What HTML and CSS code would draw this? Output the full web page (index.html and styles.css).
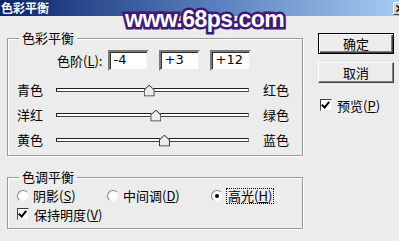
FILE: index.html
```html
<!DOCTYPE html>
<html lang="zh-CN">
<head>
    <meta charset="UTF-8">
    <title>色彩平衡</title>
    <link rel="stylesheet" href="styles.css">
</head>
<body>

<div class="dialog">
    <div class="titlebar">
        <span class="title">色彩平衡</span>
        <span class="close">
            <svg width="8" height="7" viewBox="0 0 8 7"><path d="M0.5 0.5 L7 6.5 M7 0.5 L0.5 6.5" stroke="#000" stroke-width="1.5"/></svg>
        </span>
    </div>

    <div class="content">
        <div class="left-col">
            <fieldset class="group balance">
                <legend>色彩平衡</legend>
                <div class="levels">
                    <label class="levels-label">色阶(<u>L</u>):</label>
                    <span class="field">-4</span>
                    <span class="field">+3</span>
                    <span class="field">+12</span>
                </div>
                <div class="slider-row">
                    <span class="side">青色</span>
                    <div class="track"><span class="thumb" style="left: 48%"></span></div>
                    <span class="side">红色</span>
                </div>
                <div class="slider-row">
                    <span class="side">洋红</span>
                    <div class="track"><span class="thumb" style="left: 51.5%"></span></div>
                    <span class="side">绿色</span>
                </div>
                <div class="slider-row">
                    <span class="side">黄色</span>
                    <div class="track"><span class="thumb" style="left: 56%"></span></div>
                    <span class="side">蓝色</span>
                </div>
            </fieldset>

            <fieldset class="group tone">
                <legend>色调平衡</legend>
                <div class="radios">
                    <span class="option"><span class="radio"></span><span>阴影(<u>S</u>)</span></span>
                    <span class="option"><span class="radio"></span><span>中间调(<u>D</u>)</span></span>
                    <span class="option"><span class="radio checked"></span><span class="focus">高光(<u>H</u>)</span></span>
                </div>
                <div class="check-row">
                    <span class="checkbox checked"></span><span>保持明度(<u>V</u>)</span>
                </div>
            </fieldset>
        </div>

        <div class="right-col">
            <button class="btn default">确定</button>
            <button class="btn">取消</button>
            <div class="check-row preview">
                <span class="checkbox checked"></span><span>预览(<u>P</u>)</span>
            </div>
        </div>
    </div>

    <div class="watermark">www.68ps.com</div>
</div>

</body>
</html>
```

FILE: styles.css
```css
* {
    margin: 0;
    padding: 0;
    box-sizing: border-box;
}

html, body {
    width: 399px;
    height: 241px;
    overflow: hidden;
    background: #ececec;
    font-family: "Noto Sans CJK SC", "DejaVu Sans", sans-serif;
    font-size: 13px;
    color: #000;
}

.dialog {
    position: relative;
    width: 399px;
    height: 241px;
}

/* title bar */
.titlebar {
    height: 16px;
    display: flex;
    align-items: center;
    justify-content: space-between;
    background: linear-gradient(to right, #0a246a, #5b82c0 55%, #a6caf0);
    padding-left: 1px;
}

.title {
    color: #fff;
    font-weight: bold;
    font-size: 12px;
    line-height: 16px;
}

.close {
    width: 15px;
    height: 13px;
    margin-right: -9px;
    background: #d4d0c8;
    border: 1px solid;
    border-color: #fff #404040 #404040 #fff;
    display: flex;
    align-items: center;
    padding-left: 2px;
}

/* layout */
.content {
    display: flex;
    gap: 15px;
    padding: 14px 0 0 7px;
}

.left-col {
    width: 296px;
    display: flex;
    flex-direction: column;
    gap: 13px;
}

.right-col {
    width: 76px;
    padding-top: 3px;
    display: flex;
    flex-direction: column;
    gap: 8px;
}

/* group boxes */
.group {
    border: 1px solid #9a9a9a;
    box-shadow: inset 1px 1px #fff, 1px 1px #fff;
    padding: 0;
    min-width: 0;
}

.group legend {
    margin-left: 11px;
    padding: 0 3px;
    line-height: 16px;
    background: #ececec;
}

.balance {
    height: 126px;
}

.tone {
    height: 60px;
}

/* levels row */
.levels {
    display: flex;
    align-items: center;
    margin-top: 4px;
    padding-left: 49px;
    height: 21px;
}

.levels-label {
    margin-right: 6px;
}

.field {
    width: 41px;
    height: 21px;
    margin-right: 10px;
    background: #fff;
    border: 2px solid;
    border-color: #7a7a7a #ececec #ececec #7a7a7a;
    box-shadow: inset 1px 1px #303030;
    padding-left: 3px;
    line-height: 16px;
    font-family: "DejaVu Sans", sans-serif;
    font-size: 13px;
}

/* slider rows */
.slider-row {
    display: flex;
    align-items: center;
    height: 25px;
    padding-left: 9px;
}

.levels + .slider-row {
    margin-top: 6px;
}

.side {
    width: 40px;
}

.track {
    position: relative;
    width: 197px;
    height: 4px;
    margin-right: 14px;
    background: #fff;
    border: 1px solid;
    border-color: #202020 #808080 #404040 #202020;
}

.thumb {
    position: absolute;
    top: -4px;
    width: 11px;
    height: 12px;
    margin-left: -5px;
    background: #ececec;
    clip-path: polygon(0 5px, 50% 0, 100% 5px, 100% 100%, 0 100%);
}

.thumb::before {
    content: "";
    position: absolute;
    inset: 0;
    background: #303030;
    clip-path: polygon(0 5px, 50% 0, 100% 5px, 100% 100%, 0 100%, 0 5px, 1px 5.5px, 1px 11px, 10px 11px, 10px 5.5px, 50% 1.2px, 1px 5.5px);
}

/* tone balance */
.radios {
    display: grid;
    grid-template-columns: 90px 104px auto;
    align-items: center;
    height: 16px;
    margin-top: 1px;
    padding-left: 9px;
}

.option {
    display: flex;
    align-items: center;
    gap: 4px;
}

.radio {
    width: 12px;
    height: 12px;
    border-radius: 50%;
    background: #fff;
    border: 1px solid;
    border-color: #808080 #ececec #ececec #808080;
    display: flex;
    align-items: center;
    justify-content: center;
}

.radio.checked::after {
    content: "";
    width: 4px;
    height: 4px;
    border-radius: 50%;
    background: #000;
}

.focus {
    outline: 1px dotted #000;
    padding: 0 1px;
    line-height: 14px;
}

.check-row {
    display: flex;
    align-items: center;
    gap: 5px;
    height: 16px;
    margin-top: 4px;
    padding-left: 9px;
}

.checkbox {
    width: 12px;
    height: 12px;
    background: #fff;
    border: 1px solid;
    border-color: #404040 #ececec #ececec #404040;
    position: relative;
}

.checkbox.checked::after {
    content: "";
    position: absolute;
    left: 2px;
    top: 0;
    width: 3px;
    height: 6px;
    border: solid #000;
    border-width: 0 2px 2px 0;
    transform: rotate(40deg);
}

/* buttons */
.btn {
    height: 21px;
    width: 76px;
    background: #ececec;
    border: 1px solid;
    border-color: #fff #404040 #404040 #fff;
    box-shadow: inset -1px -1px #808080;
    font-family: inherit;
    font-size: 13px;
    line-height: 17px;
}

.btn.default {
    border: 1px solid #000;
    box-shadow: inset 1px 1px #fff, inset -1px -1px #404040, inset -2px -2px #808080;
}

.preview {
    margin-top: 6px;
    padding-left: 2px;
}

/* watermark */
.watermark {
    position: absolute;
    left: 125px;
    top: 6px;
    font-family: "Liberation Sans", sans-serif;
    font-weight: bold;
    font-size: 23px;
    letter-spacing: -0.5px;
    color: #fff;
    -webkit-text-stroke: 5px #3d1a78;
    paint-order: stroke fill;
}
```
